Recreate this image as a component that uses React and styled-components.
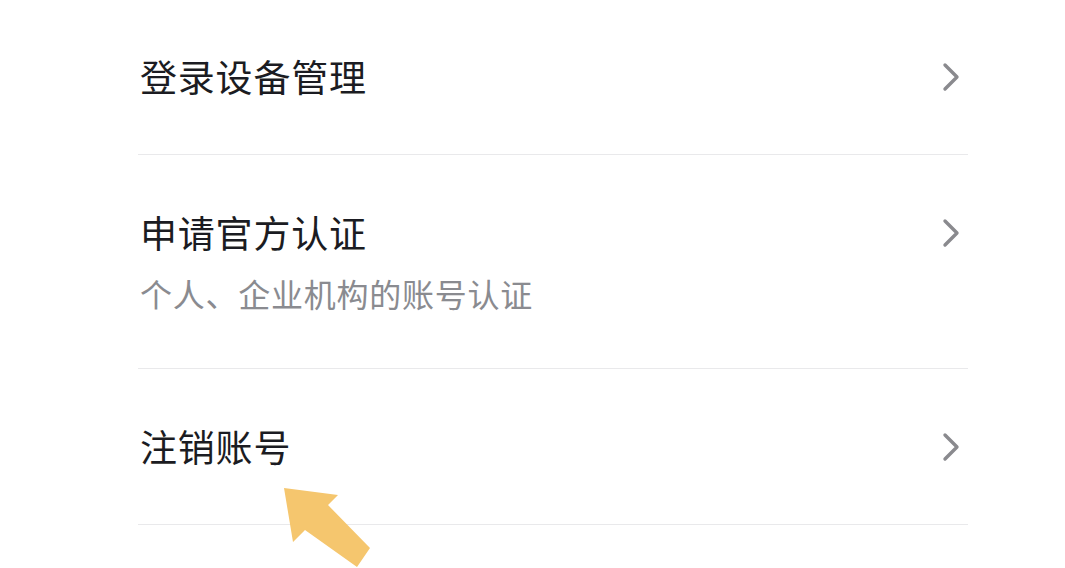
import React from 'react';
import styled, { createGlobalStyle } from 'styled-components';

const GlobalStyle = createGlobalStyle`
  html, body {
    margin: 0;
    padding: 0;
    background: #ffffff;
  }
  body {
    font-family: "Noto Sans CJK SC", "Noto Sans", sans-serif;
    overflow: hidden;
  }
`;

const Page = styled.div`
  width: 1065px;
  height: 568px;
  position: relative;
  overflow: hidden;
  background: #ffffff;
`;

const List = styled.div`
  margin: -1px 97px 0 138px;
  display: flex;
  flex-direction: column;
`;

const Row = styled.div`
  display: flex;
  align-items: center;
  justify-content: space-between;
  padding: 59px 8px 59px 2px;
  border-bottom: 1.5px solid #e9e9eb;
`;

const Texts = styled.div`
  display: flex;
  flex-direction: column;
  gap: 26px;
`;

const Title = styled.div`
  font-size: 37px;
  line-height: 37px;
  color: #1b1c22;
  letter-spacing: 0.8px;
`;

const Sub = styled.div`
  font-size: 32px;
  line-height: 32px;
  color: #8a8b90;
  letter-spacing: 0.75px;
`;

const Chevron = styled.svg`
  width: 18px;
  height: 30px;
  flex: none;
  align-self: ${(p) => (p.$top ? 'flex-start' : 'center')};
  margin-top: ${(p) => (p.$top ? '4px' : '0')};
`;

const Arrow = styled.svg`
  position: absolute;
  left: 280px;
  top: 484px;
  width: 95px;
  height: 90px;
`;

const ChevronIcon = ({ top }) => (
  <Chevron viewBox="0 0 18 30" $top={top}>
    <polyline
      points="3,3 15,15 3,27"
      fill="none"
      stroke="#8a8a8e"
      strokeWidth="3.4"
      strokeLinecap="round"
      strokeLinejoin="round"
    />
  </Chevron>
);

const items = [
  { title: '登录设备管理' },
  { title: '申请官方认证', sub: '个人、企业机构的账号认证' },
  { title: '注销账号' },
];

export default function App() {
  return (
    <Page>
      <GlobalStyle />
      <List>
        {items.map((it) => (
          <Row key={it.title}>
            <Texts>
              <Title>{it.title}</Title>
              {it.sub && <Sub>{it.sub}</Sub>}
            </Texts>
            <ChevronIcon top={!!it.sub} />
          </Row>
        ))}
      </List>
      <Arrow viewBox="280 484 95 90">
        <polygon
          points="284,488 338,495 328,505 370,548 357,567 305,530 293,542"
          fill="#f5c66e"
        />
      </Arrow>
    </Page>
  );
}
